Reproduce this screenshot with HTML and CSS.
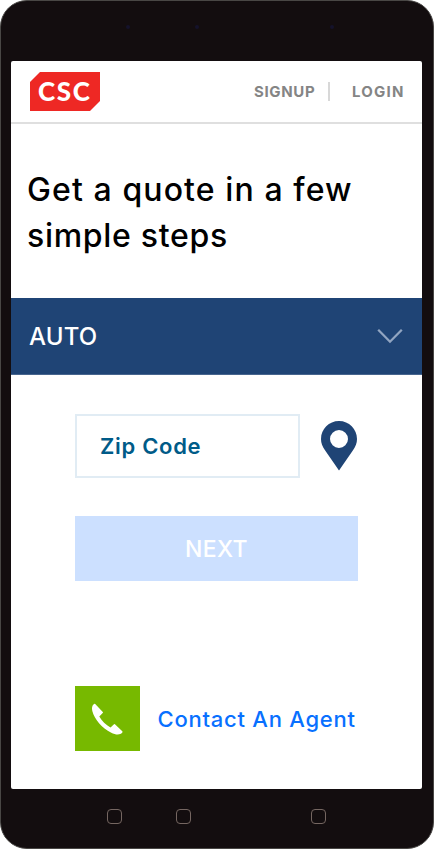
FILE: index.html
```html
<!DOCTYPE html>
<html lang="en">
<head>
<meta charset="utf-8">
<title>CSC - Get a quote</title>
<link rel="stylesheet" href="styles.css">
</head>
<body>
<div class="phone">
  <div class="bezel-top"><i class="sensor"></i><i class="sensor"></i><i class="sensor"></i></div>
  <div class="screen">
    <header class="header">
      <div class="logo"><span>CSC</span></div>
      <nav class="nav"><a class="signup">SIGNUP</a><i class="divider"></i><a class="login">LOGIN</a></nav>
    </header>
    <h1 class="title"><span class="line-one">Get a quote in a few</span><br><span class="line-two">simple steps</span></h1>
    <div class="select">
      <span>AUTO</span>
      <svg class="chevron" width="26" height="16" viewBox="0 0 26 16"><path d="M1.200 1.800 13 13.700 24.800 1.800" fill="none" stroke="#91a5c1" stroke-width="2.300"/></svg>
    </div>
    <div class="form">
      <div class="zip-row">
        <div class="zip"><span>Zip Code</span></div>
        <svg class="pin" width="36" height="50" viewBox="0 0 36 50"><path fill="#1f4475" fill-rule="evenodd" d="M18 0C8 0 0 8 0 18c0 4 1.400 7.300 4 11.300L18 49.500l14-20.200c2.600-4 4-7.300 4-11.300C36 8 28 0 18 0Zm0 9a9 9 0 1 1 0 18 9 9 0 0 1 0-18Z"/></svg>
      </div>
      <div class="next"><span>NEXT</span></div>
      <div class="contact">
        <div class="call"><svg width="65" height="65" viewBox="0 0 65 65"><path fill="#fff" d="M20.200 18 27.800 26q.5.600-.1 1.100L24.300 30.400c2.600 4.300 6.500 8.300 11.200 11.200l3.500-3.300q.6-.5 1.200.1l7.100 6.800q.6.700 0 1.400c-2.600 3.100-7.100 2.100-11 .1C26.700 41.700 19.600 33.500 17.300 24.900c-.7-2.900-.3-5.200 1.700-6.800q.6-.6 1.200-.1Z"/></svg></div>
        <a>Contact An Agent</a>
      </div>
    </div>
  </div>
  <div class="bezel-bottom"><i class="key"></i><i class="key"></i><i class="key"></i></div>
</div>
</body>
</html>
```
FILE: styles.css
```css
* { box-sizing: border-box; }
body { margin: 0; background: #fff; font-family: Inter, "Liberation Sans", sans-serif; }
.phone { width: 434px; height: 849px; background: #130d0f; border: 1px solid #494745; border-radius: 27px; padding: 0 11px 0 10px; overflow: hidden; }
.bezel-top { height: 60px; padding: 24px 0 0 115px; display: flex; gap: 65px; }
.sensor { width: 4px; height: 4px; border-radius: 50%; background: #15122b; }
.sensor:last-child { margin-left: 66px; }
.screen { width: 411px; height: 728px; background: #fff; border-radius: 2px; overflow: hidden; }
.header { height: 63px; border-bottom: 2px solid #dfdfdf; padding: 0 17px 0 19px; display: flex; justify-content: space-between; align-items: center; }
.logo { width: 70px; height: 39px; background: #ee2824; clip-path: polygon(10px 0, 100% 0, 100% 29px, 60px 100%, 0 100%, 0 10px); padding-left: 8px; color: #fff; font: 900 26px/39px Lato, sans-serif; letter-spacing: 1.7px; }
.nav { display: flex; align-items: center; color: #858585; font-size: 15px; font-weight: 700; }
.divider { width: 2px; height: 19px; background: #d8d8d8; margin: 0 22px 0 13px; }
.signup { width: 61px; white-space: nowrap; letter-spacing: .65px; }
.login { width: 53px; white-space: nowrap; letter-spacing: 1.200px; }
.title { margin: 0; height: 174px; padding: 43px 0 0 16px; color: #000; font-size: 32px; line-height: 46px; font-weight: 500; white-space: nowrap; }
.line-one { letter-spacing: 1.1px; }
.line-two { letter-spacing: .7px; }
.select { height: 77px; padding: 0 19px 0 18px; background: #1f4475; border-bottom: 1px solid #47658e; color: #fff; font-size: 24px; font-weight: 500; letter-spacing: .2px; display: flex; justify-content: space-between; align-items: center; }
.form { padding: 39px 64px 0; }
.zip-row { display: flex; align-items: center; gap: 21px; }
.zip { flex: 0 0 225px; height: 64px; border: 2px solid #e1ecf4; padding-left: 23px; display: flex; align-items: center; color: #005b88; font-size: 22px; font-weight: 600; letter-spacing: .7px; }
.pin { flex: none; }
.next { width: 283px; height: 65px; margin-top: 38px; background: #cce0ff; color: #fff; font-size: 23px; font-weight: 500; letter-spacing: .4px; display: flex; align-items: center; justify-content: center; }
.contact { margin-top: 105px; height: 65px; display: flex; align-items: center; gap: 17.500px; color: #0870ff; font-size: 22px; font-weight: 500; letter-spacing: .75px; white-space: nowrap; }
.call { width: 65px; height: 65px; background: #77b900; }
.call svg { display: block; }
.bezel-bottom { height: 59px; display: flex; padding: 20px 0 0 96px; }
.key { width: 15px; height: 15px; border: 1px solid #756661; border-radius: 4px; }
.key + .key { margin-left: 54px; }
.key:last-child { margin-left: 120px; }
```
